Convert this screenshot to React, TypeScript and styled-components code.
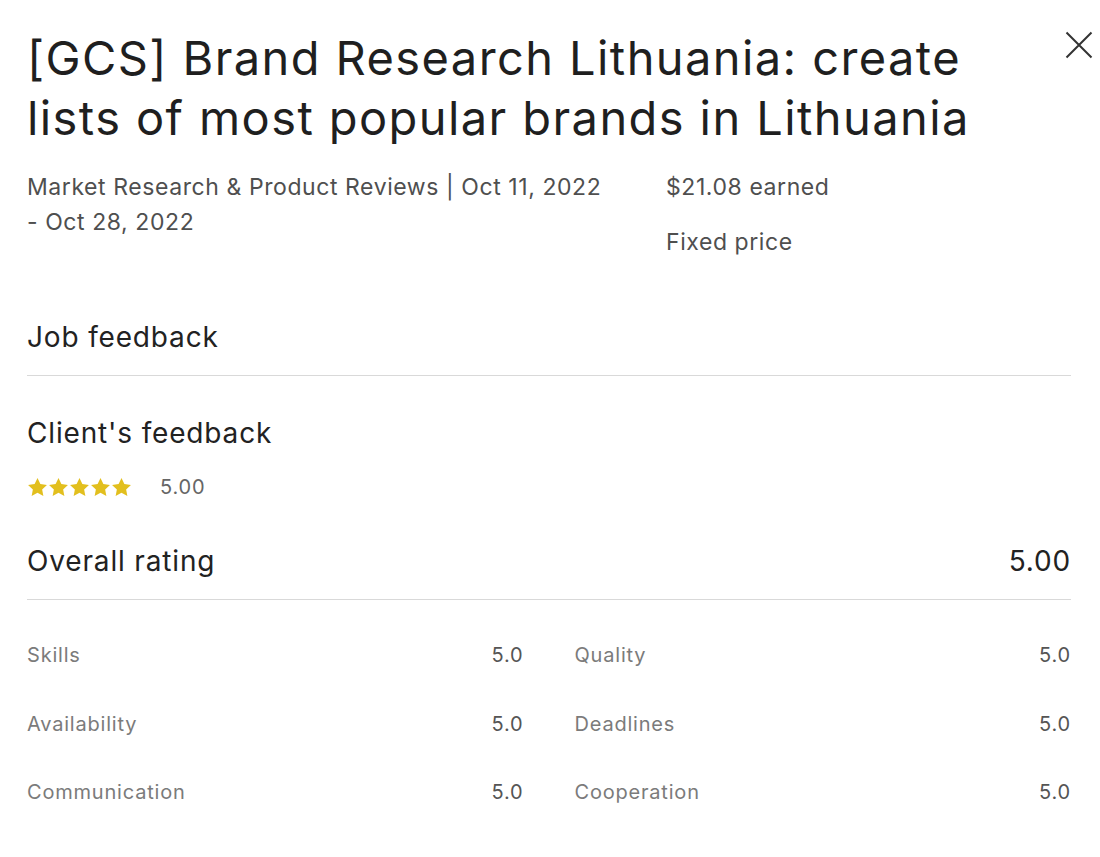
import React from 'react';
import styled, { createGlobalStyle } from 'styled-components';

const GlobalStyle = createGlobalStyle`
  html, body {
    margin: 0;
    padding: 0;
    background: #fff;
  }
  body {
    font-family: Inter, "Liberation Sans", Arial, sans-serif;
    color: #222;
  }
`;

const scores = [
  { label: 'Skills', value: '5.0' },
  { label: 'Quality', value: '5.0' },
  { label: 'Availability', value: '5.0' },
  { label: 'Deadlines', value: '5.0' },
  { label: 'Communication', value: '5.0' },
  { label: 'Cooperation', value: '5.0' },
];

const Star = () => (
  <svg width="21" height="21" viewBox="0 0 24 24">
    <path
      d="M12 1.2l3.3 6.9 7.5.9-5.5 5.2 1.4 7.5L12 18l-6.7 3.7 1.4-7.5-5.5-5.2 7.5-.9z"
      fill="#e2bf1e"
    />
  </svg>
);

const CloseIcon = () => (
  <svg width="28" height="28" viewBox="0 0 28 28">
    <path d="M1.5 1.5l25 25M26.5 1.5l-25 25" stroke="#333" strokeWidth="2" fill="none" />
  </svg>
);

const App = () => {
  return (
    <>
      <GlobalStyle />
      <Modal>
        <Header>
          <Title>[GCS] Brand Research Lithuania: create lists of most popular brands in Lithuania</Title>
          <CloseButton aria-label="Close"><CloseIcon /></CloseButton>
        </Header>

        <Meta>
          <MetaLeft>Market Research &amp; Product Reviews | Oct 11, 2022 - Oct 28, 2022</MetaLeft>
          <MetaRight>
            <MetaLine>$21.08 earned</MetaLine>
            <MetaLine>Fixed price</MetaLine>
          </MetaRight>
        </Meta>

        <SectionTitle>Job feedback</SectionTitle>

        <SubTitle>Client's feedback</SubTitle>
        <StarRow>
          <Stars>
            <Star /><Star /><Star /><Star /><Star />
          </Stars>
          <StarScore>5.00</StarScore>
        </StarRow>

        <OverallRow>
          <span>Overall rating</span>
          <span>5.00</span>
        </OverallRow>

        <ScoreGrid>
          {scores.map((s) => (
            <ScoreItem key={s.label}>
              <ScoreLabel>{s.label}</ScoreLabel>
              <ScoreValue>{s.value}</ScoreValue>
            </ScoreItem>
          ))}
        </ScoreGrid>
      </Modal>
    </>
  );
};

const Modal = styled.div`
  width: 1100px;
  box-sizing: border-box;
  padding: 28px 29px 40px 27px;
  display: flex;
  flex-direction: column;
`;

const Header = styled.div`
  display: flex;
  align-items: flex-start;
  gap: 40px;
`;

const Title = styled.h1`
  flex: 1;
  margin: 0;
  font-size: 47px;
  line-height: 60px;
  font-weight: 400;
  letter-spacing: 0.03em;
  color: #1f1f1f;
`;

const CloseButton = styled.button`
  flex: none;
  border: none;
  background: none;
  padding: 0;
  margin: 3px -22px 0 0;
  width: 28px;
  height: 28px;
  cursor: pointer;
  display: flex;
`;

const Meta = styled.div`
  display: flex;
  gap: 59px;
  margin-top: 22px;
  font-size: 23px;
  line-height: 35px;
  letter-spacing: 0.025em;
  color: #4f4f4f;
`;

const MetaLeft = styled.div`
  flex: 0 0 580px;
`;

const MetaRight = styled.div`
  display: flex;
  flex-direction: column;
  gap: 20px;
`;

const MetaLine = styled.div``;

const SectionTitle = styled.h2`
  margin: 59px 0 0;
  padding-bottom: 20px;
  border-bottom: 1px solid #d9d9d9;
  font-size: 28px;
  line-height: 36px;
  font-weight: 400;
  letter-spacing: 0.03em;
  color: #222;
`;

const SubTitle = styled.h3`
  margin: 39px 0 0;
  font-size: 28px;
  line-height: 36px;
  font-weight: 400;
  letter-spacing: 0.03em;
  color: #222;
`;

const StarRow = styled.div`
  display: flex;
  align-items: center;
  gap: 28px;
  margin-top: 24px;
`;

const Stars = styled.div`
  display: flex;
  gap: 0;
`;

const StarScore = styled.span`
  font-size: 20px;
  letter-spacing: 0.04em;
  color: #666;
`;

const OverallRow = styled.div`
  display: flex;
  justify-content: space-between;
  align-items: center;
  margin-top: 44px;
  padding-bottom: 20px;
  border-bottom: 1px solid #d9d9d9;
  font-size: 28px;
  line-height: 36px;
  letter-spacing: 0.03em;
  color: #222;
`;

const ScoreGrid = styled.div`
  display: grid;
  grid-template-columns: 1fr 1fr;
  column-gap: 51px;
  row-gap: 40.5px;
  margin-top: 41px;
`;

const ScoreItem = styled.div`
  display: flex;
  justify-content: space-between;
  align-items: center;
  font-size: 20px;
  line-height: 28px;
  letter-spacing: 0.04em;
`;

const ScoreLabel = styled.span`
  color: #7b7b7b;
`;

const ScoreValue = styled.span`
  color: #555;
`;

export default App;
